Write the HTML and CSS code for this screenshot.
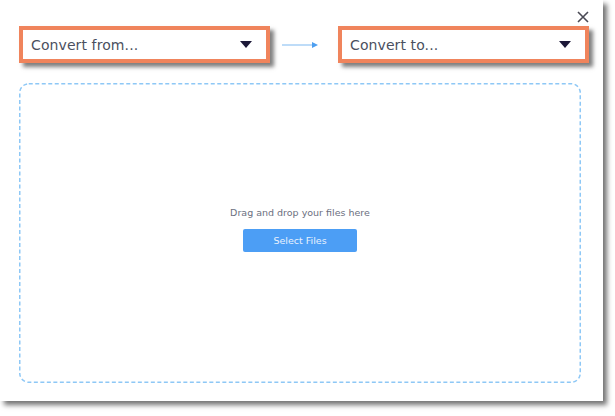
FILE: index.html
```html
<!DOCTYPE html>
<html>
<head>
<meta charset="utf-8">
<link rel="stylesheet" href="styles.css">
</head>
<body>
<div class="window">
  <button class="close" aria-label="Close">
    <svg width="12" height="12" viewBox="0 0 12 12"><path d="M1 1 L11 11 M11 1 L1 11" stroke="#4a4a55" stroke-width="1.6" fill="none"/></svg>
  </button>
  <div class="top-row">
    <div class="select">
      <span class="label">Convert from...</span>
      <svg class="caret" width="12" height="8" viewBox="0 0 12 8"><path d="M0 0 H12 L6 7 Z" fill="#1c1838"/></svg>
    </div>
    <svg class="arrow" width="36" height="8" viewBox="0 0 36 8"><path d="M0 4 H31" stroke="#a8d0f6" stroke-width="1.5"/><path d="M30 1 L36 4 L30 7 Z" fill="#4d9ff0"/></svg>
    <div class="select">
      <span class="label">Convert to...</span>
      <svg class="caret" width="12" height="8" viewBox="0 0 12 8"><path d="M0 0 H12 L6 7 Z" fill="#1c1838"/></svg>
    </div>
  </div>
  <div class="dropzone">
    <svg class="dash" width="562" height="300" viewBox="0 0 562 300"><rect x="0.75" y="0.75" width="560.5" height="298.5" rx="9" ry="9" fill="none" stroke="#8ec8f6" stroke-width="1.5" stroke-dasharray="4 2.5"/></svg>
    <p class="hint">Drag and drop your files here</p>
    <button class="select-files">Select Files</button>
  </div>
</div>
</body>
</html>
```

FILE: styles.css
```css
html, body {
  margin: 0;
  padding: 0;
  background: #ffffff;
}
body {
  width: 615px;
  height: 416px;
  font-family: "DejaVu Sans", Verdana, sans-serif;
}
.window {
  position: relative;
  width: 603px;
  height: 401px;
  background: #ffffff;
  box-shadow: 4px 4px 5px rgba(0, 0, 0, 0.55);
  box-sizing: border-box;
  padding: 26px 0 0 19px;
}
.close {
  position: absolute;
  top: 10px;
  right: 13px;
  width: 14px;
  height: 14px;
  padding: 0;
  margin: 0;
  border: none;
  background: none;
  display: flex;
  align-items: center;
  justify-content: center;
}
.top-row {
  display: flex;
  align-items: center;
  height: 37px;
}
.select {
  width: 251px;
  height: 37px;
  box-sizing: border-box;
  border: 4px solid #f0845c;
  background: #ffffff;
  box-shadow: 4px 4px 4px rgba(0, 0, 0, 0.5);
  display: flex;
  align-items: center;
  justify-content: space-between;
  padding: 0 14px 0 8px;
}
.label {
  font-size: 14px;
  color: #4b5060;
  letter-spacing: 0.1px;
}
.caret {
  display: block;
}
.arrow {
  margin: 0 20px 0 12px;
  display: block;
}
.dropzone {
  position: relative;
  margin-top: 20px;
  width: 562px;
  height: 300px;
  display: flex;
  flex-direction: column;
  align-items: center;
  justify-content: center;
  padding-bottom: 8px;
  box-sizing: border-box;
}
.dash {
  position: absolute;
  top: 0;
  left: 0;
}
.hint {
  margin: 0 0 11px 0;
  font-size: 9.5px;
  color: #6b7080;
}
.select-files {
  width: 114px;
  height: 23px;
  border: none;
  border-radius: 2px;
  background: #4c9ef5;
  color: #e8f1fd;
  font-family: "DejaVu Sans", Verdana, sans-serif;
  font-size: 9.5px;
  padding: 0;
}
```
